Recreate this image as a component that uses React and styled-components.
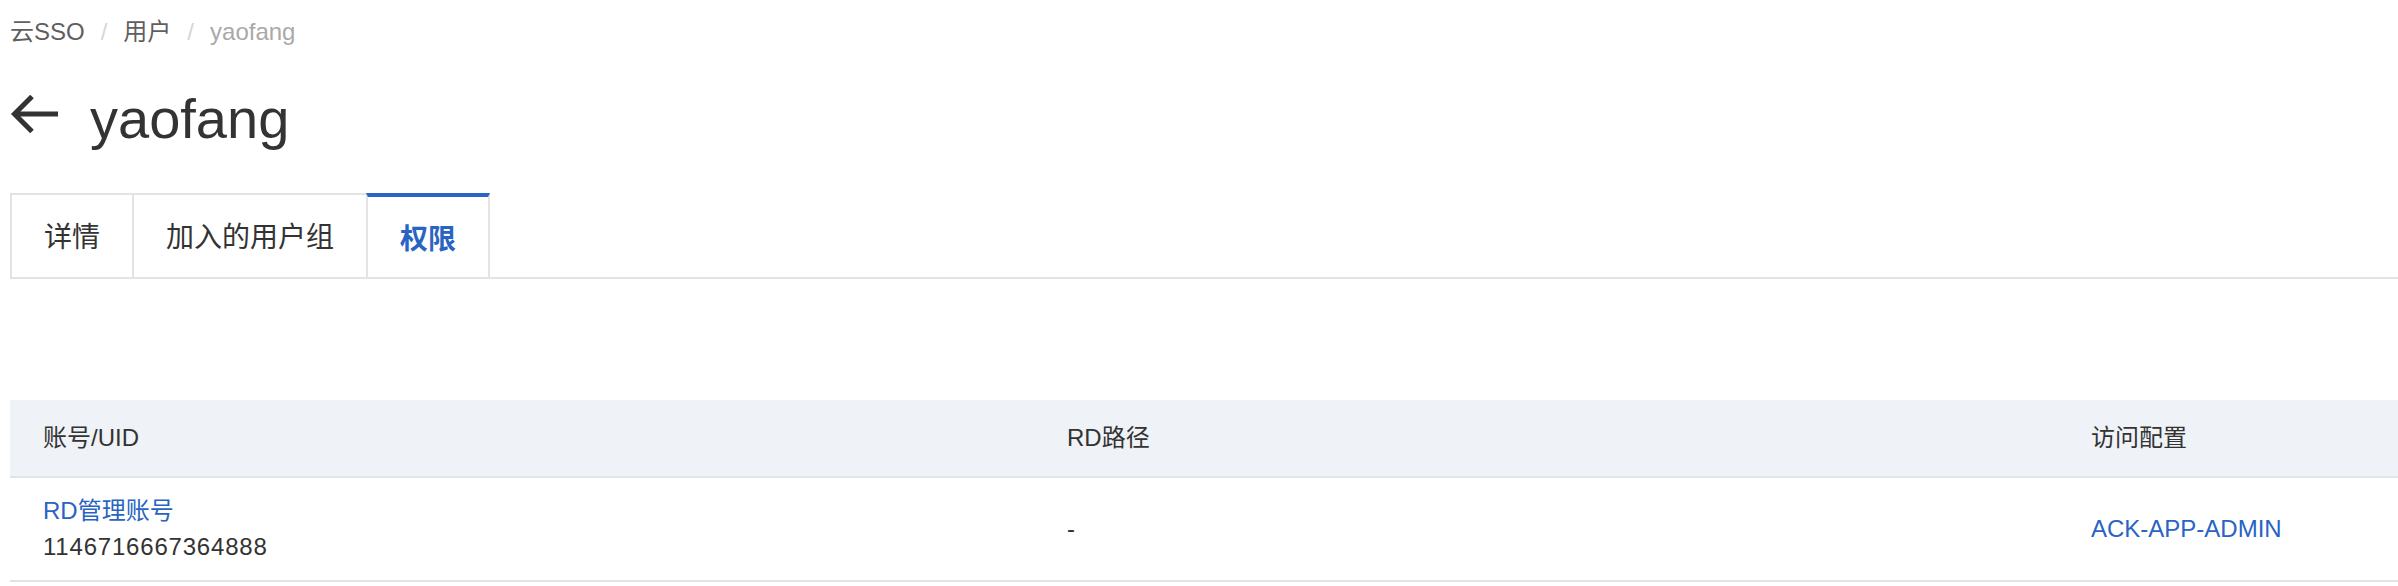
import React from "react";
import styled, { createGlobalStyle } from "styled-components";

const GlobalStyle = createGlobalStyle`
  html, body {
    margin: 0;
    padding: 0;
    background: #ffffff;
    overflow-x: hidden;
  }
  body {
    font-family: "Liberation Sans", "Noto Sans CJK SC", sans-serif;
    color: #333333;
  }
`;

const Page = styled.div`
  padding: 14px 0 0 10px;
  display: flex;
  flex-direction: column;
`;

const Breadcrumb = styled.nav`
  display: flex;
  align-items: center;
  gap: 16px;
  font-size: 24px;
  line-height: 36px;
  height: 36px;
`;

const Crumb = styled.span`
  color: ${(p) => (p.$current ? "#a9a9a9" : "#5f5f5f")};
`;

const Sep = styled.span`
  color: #d6d6d6;
`;

const TitleRow = styled.div`
  display: flex;
  align-items: flex-start;
  gap: 32px;
  margin-top: 37px;
`;

const BackButton = styled.button`
  border: none;
  background: none;
  padding: 0;
  margin-top: 8px;
  width: 48px;
  height: 38px;
  display: flex;
  cursor: pointer;
`;

const Title = styled.h1`
  margin: 0;
  font-size: 56px;
  line-height: 64px;
  font-weight: 400;
  color: #333333;
`;

const TabBar = styled.div`
  display: flex;
  margin-top: 42px;
  border-bottom: 2px solid #e3e3e3;
`;

const Tab = styled.div`
  height: 84px;
  padding: 0 32px;
  display: flex;
  align-items: center;
  font-size: 28px;
  background: #ffffff;
  border: 2px solid #e3e3e3;
  border-bottom: none;
  border-top: ${(p) => (p.$active ? "4px solid #2963c3" : "2px solid #e3e3e3")};
  margin-left: -2px;
  margin-bottom: ${(p) => (p.$active ? "-2px" : "0")};
  padding-bottom: ${(p) => (p.$active ? "0" : "2px")};
  color: ${(p) => (p.$active ? "#2963c3" : "#333333")};
  font-weight: ${(p) => (p.$active ? 600 : 400)};
  box-sizing: border-box;
  cursor: pointer;

  &:first-child {
    margin-left: 0;
  }
`;

const TableWrap = styled.div`
  margin-top: 121px;
`;

const Row = styled.div`
  display: grid;
  grid-template-columns: 1024px 1024px 1fr;
  border-bottom: 2px solid #e2e3e7;
  background: ${(p) => (p.$head ? "#eff2f7" : "#ffffff")};
  min-height: ${(p) => (p.$head ? "76px" : "102px")};
`;

const Cell = styled.div`
  padding: 0 33px;
  display: flex;
  flex-direction: column;
  justify-content: center;
  font-size: 24px;
  line-height: 36px;
  color: #333333;
`;

const Link = styled.a`
  color: #2963c3;
  text-decoration: none;
  cursor: pointer;
`;

const Uid = styled.span`
  letter-spacing: 0.8px;
`;

function ArrowLeft() {
  return (
    <svg width="48" height="38" viewBox="0 0 48 38" fill="none">
      <path d="M48 19H4" stroke="#333" strokeWidth="5" />
      <path d="M22 1.5L4.5 19L22 36.5" stroke="#333" strokeWidth="5" />
    </svg>
  );
}

export default function App() {
  const tabs = ["详情", "加入的用户组", "权限"];
  return (
    <>
      <GlobalStyle />
      <Page>
        <Breadcrumb>
          <Crumb>云SSO</Crumb>
          <Sep>/</Sep>
          <Crumb>用户</Crumb>
          <Sep>/</Sep>
          <Crumb $current>yaofang</Crumb>
        </Breadcrumb>
        <TitleRow>
          <BackButton aria-label="back">
            <ArrowLeft />
          </BackButton>
          <Title>yaofang</Title>
        </TitleRow>
        <TabBar>
          {tabs.map((t, i) => (
            <Tab key={t} $active={i === 2}>
              {t}
            </Tab>
          ))}
        </TabBar>
        <TableWrap>
          <Row $head>
            <Cell>账号/UID</Cell>
            <Cell>RD路径</Cell>
            <Cell>访问配置</Cell>
          </Row>
          <Row>
            <Cell>
              <Link>RD管理账号</Link>
              <Uid>1146716667364888</Uid>
            </Cell>
            <Cell>-</Cell>
            <Cell>
              <Link>ACK-APP-ADMIN</Link>
            </Cell>
          </Row>
        </TableWrap>
      </Page>
    </>
  );
}
